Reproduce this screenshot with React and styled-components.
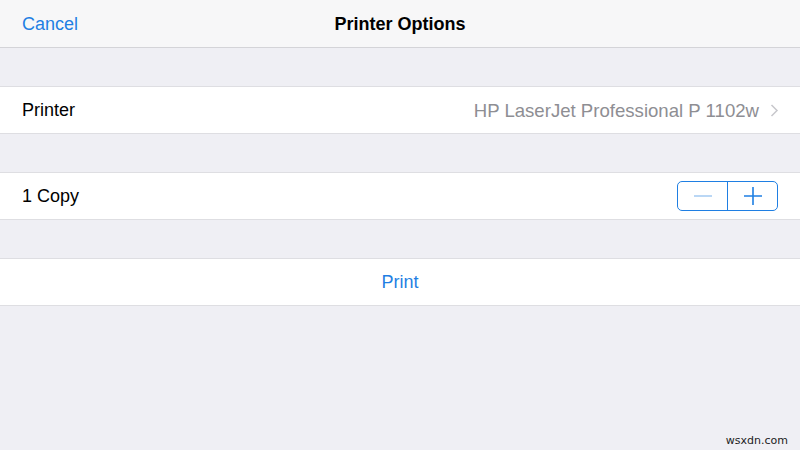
import styled, { createGlobalStyle } from 'styled-components'

const GlobalStyle = createGlobalStyle`
    html, body {
        margin: 0;
        padding: 0;
        background: #efeff4;
    }
    body {
        font-family: "Liberation Sans", Arial, sans-serif;
    }
`

const Page = styled.div`
    width: 800px;
    height: 450px;
    background: #efeff4;
    display: flex;
    flex-direction: column;
    position: relative;
    overflow: hidden;
`
const NavBar = styled.div`
    height: 48px;
    box-sizing: border-box;
    padding: 2px 22px 0;
    background: #f7f7f8;
    border-bottom: 1px solid #d4d4d8;
    display: grid;
    grid-template-columns: 1fr auto 1fr;
    align-items: center;
`
const NavButton = styled.span`
    font-size: 18px;
    color: #1f7fe3;
    justify-self: start;
`
const Title = styled.span`
    font-size: 18px;
    font-weight: 700;
    color: #000;
`
const Group = styled.div`
    margin-top: 38px;
    background: #fff;
    border-top: 1px solid #dedee2;
    border-bottom: 1px solid #dedee2;
`
const Row = styled.div`
    height: 46px;
    padding: 1px 22px 0;
    box-sizing: border-box;
    display: flex;
    align-items: center;
    justify-content: ${p => (p.$center ? 'center' : 'space-between')};
    font-size: 18px;
    color: #000;
`
const Value = styled.span`
    display: flex;
    align-items: center;
    gap: 11px;
    font-size: 18.6px;
    color: #8e8e93;
    margin-right: -1px;
`
const ActionLabel = styled.span`
    color: #1f7fe3;
`
const Stepper = styled.div`
    display: flex;
    width: 101px;
    height: 30px;
    margin-top: -1px;
    border: 1px solid #1f7fe3;
    border-radius: 5px;
    box-sizing: border-box;
`
const StepButton = styled.button`
    flex: 1;
    border: none;
    background: transparent;
    padding: 0;
    display: flex;
    align-items: center;
    justify-content: center;
    cursor: pointer;
    & + & {
        border-left: 1px solid #1f7fe3;
    }
`
const Watermark = styled.span`
    position: absolute;
    right: 12px;
    bottom: 3px;
    font-family: "DejaVu Sans", sans-serif;
    font-size: 11px;
    color: #222;
`

const Chevron = () => (
    <svg width="9" height="13" viewBox="0 0 9 13">
        <path d="M1.5 1 L7 6.5 L1.5 12" fill="none" stroke="#c7c7cc" strokeWidth="1.5" />
    </svg>
)

const Minus = () => (
    <svg width="20" height="20" viewBox="0 0 20 20">
        <path d="M1 10 H19" stroke="#a9cdf3" strokeWidth="1.6" />
    </svg>
)

const Plus = () => (
    <svg width="20" height="20" viewBox="0 0 20 20">
        <path d="M1 10 H19 M10 1 V19" stroke="#1f7fe3" strokeWidth="1.6" />
    </svg>
)

const App = () => {
    return (
        <Page>
            <GlobalStyle />
            <NavBar>
                <NavButton>Cancel</NavButton>
                <Title>Printer Options</Title>
            </NavBar>
            <Group>
                <Row>
                    <span>Printer</span>
                    <Value>
                        HP LaserJet Professional P 1102w
                        <Chevron />
                    </Value>
                </Row>
            </Group>
            <Group>
                <Row>
                    <span>1 Copy</span>
                    <Stepper>
                        <StepButton><Minus /></StepButton>
                        <StepButton><Plus /></StepButton>
                    </Stepper>
                </Row>
            </Group>
            <Group>
                <Row $center>
                    <ActionLabel>Print</ActionLabel>
                </Row>
            </Group>
            <Watermark>wsxdn.com</Watermark>
        </Page>
    )
}

export default App
